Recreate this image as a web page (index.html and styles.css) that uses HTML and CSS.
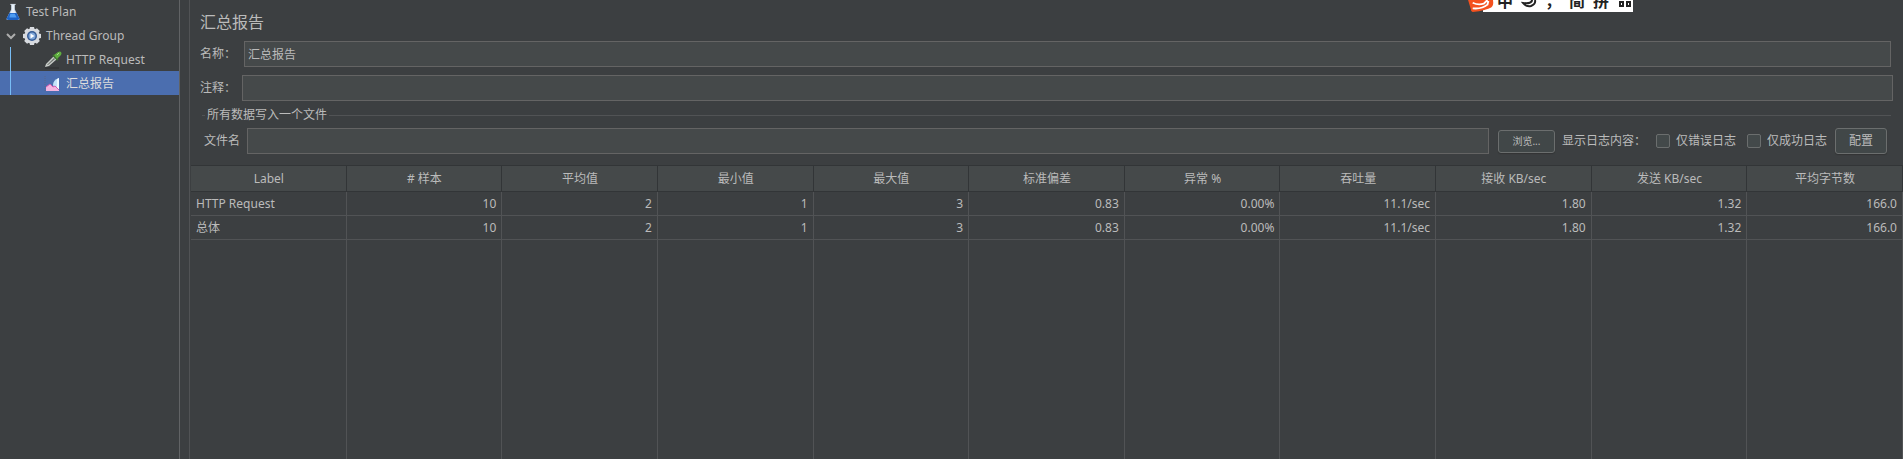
FILE: index.html
```html
<!DOCTYPE html>
<html lang="zh-CN">
<head>
<meta charset="utf-8">
<title>汇总报告</title>
<link rel="stylesheet" href="styles.css">
</head>
<body>
<div class="app">
  <nav class="tree">
    <ul class="tree-list">
      <li class="node node-root">
        <svg class="icon" viewBox="0 0 18 20"><path d="M7 1v6L2 17q-1 2 1 2h12q2 0 1-2L11 7V1z" fill="#b9cbdd"/><path d="M7.500 2v6L5 13h8l-2.500-5V2z" fill="#e8f0f8"/><path d="M5 11h8l3 6q0 2-2 2H4q-2 0-2-2z" fill="#1d62c4"/><path d="M6 12h5l2 4H5z" fill="#4d9cf2"/><path d="M6 1h6v1H6z" fill="#d9e2ea"/></svg>
        <span>Test Plan</span>
      </li>
      <li class="node node-group">
        <svg class="arrow" viewBox="0 0 10 10"><path d="M1 3l4 4 4-4" fill="none" stroke="#adadad" stroke-width="2"/></svg>
        <svg class="icon" viewBox="0 0 20 20"><g fill="#d8dbe0"><circle cx="10" cy="10" r="7.500"/><path d="M8 1h4l1 4H7zM8 19h4l1-4H7z"/><path d="M8 1h4l1 4H7zM8 19h4l1-4H7z" transform="rotate(45 10 10)"/><path d="M8 1h4l1 4H7zM8 19h4l1-4H7z" transform="rotate(90 10 10)"/><path d="M8 1h4l1 4H7zM8 19h4l1-4H7z" transform="rotate(135 10 10)"/></g><circle cx="10" cy="10" r="5" fill="#345a94"/><circle cx="10" cy="10" r="3.500" fill="#7fa6d8"/><path d="M8.500 7.500v5l4-2.500z" fill="#fff"/></svg>
        <span>Thread Group</span>
      </li>
      <li class="node node-leaf">
        <svg class="icon" viewBox="0 0 18 18"><path d="M1 17h14" stroke="#2d2f30" stroke-width="1"/><path d="M1 16l1-3 8-8 3 3-8 7z" fill="#c9cdc9"/><path d="M3 14l7-7 1 1-7 6z" fill="#6b706b"/><path d="M9 4l5 5" stroke="#3c6e2e" stroke-width="2"/><path d="M10 4l4-3q2-1 3 0t0 3l-4 4z" fill="#5fae3f"/><path d="M13 4l2-2" stroke="#a6dd8c"/></svg>
        <span>HTTP Request</span>
      </li>
      <li class="node node-leaf selected">
        <svg class="icon" viewBox="0 0 18 18"><path d="M1 1v15" stroke="#56678c" stroke-dasharray="1 1"/><path d="M9 10q0-5 6-7v12h-4z" fill="#c4e4fa"/><path d="M13 4l2-1v12h-2z" fill="#eef8ff"/><path d="M2 16v-4l4-3 3 3 2-1 4 4v1z" fill="#f3b4e0"/><path d="M2 12l4-3 3 3 2-1 4 4" fill="none" stroke="#d35ab2"/></svg>
        <span>汇总报告</span>
      </li>
    </ul>
  </nav>
  <main class="panel">
    <form class="form">
      <h1 class="title">汇总报告</h1>
      <div class="field field-name"><label for="name">名称：</label><input class="text" id="name" type="text" value="汇总报告"></div>
      <div class="field field-note"><label for="note">注释：</label><input class="text" id="note" type="text"></div>
      <fieldset class="file">
        <legend>所有数据写入一个文件</legend>
        <div class="file-row">
          <label for="file">文件名</label>
          <input class="text file-input" id="file" type="text">
          <button class="button browse" type="button">浏览...</button>
          <span class="log-label">显示日志内容：</span>
          <label class="check"><input type="checkbox">仅错误日志</label>
          <label class="check"><input type="checkbox">仅成功日志</label>
          <button class="button config" type="button">配置</button>
        </div>
      </fieldset>
    </form>
    <div class="table-area">
    <table class="report">
      <thead>
        <tr><th>Label</th><th># 样本</th><th>平均值</th><th>最小值</th><th>最大值</th><th>标准偏差</th><th>异常 %</th><th>吞吐量</th><th>接收 KB/sec</th><th>发送 KB/sec</th><th>平均字节数</th></tr>
      </thead>
      <tbody>
        <tr class="row"><td>HTTP Request</td><td>10</td><td>2</td><td>1</td><td>3</td><td>0.83</td><td>0.00%</td><td>11.1/sec</td><td>1.80</td><td>1.32</td><td>166.0</td></tr>
        <tr class="row"><td>总体</td><td>10</td><td>2</td><td>1</td><td>3</td><td>0.83</td><td>0.00%</td><td>11.1/sec</td><td>1.80</td><td>1.32</td><td>166.0</td></tr>
        <tr class="rest"><td></td><td></td><td></td><td></td><td></td><td></td><td></td><td></td><td></td><td></td><td></td></tr>
      </tbody>
    </table>
    </div>
  </main>
  <div class="ime">
    <svg class="ime-logo" viewBox="0 0 28 13"><path d="M0 0h27q1 6-2 8-5 3-20 5-2 0-2-3z" fill="#f4511e"/><path d="M5 3q6 3 12 1l4-4M5 9q10 1 16-4l1-4" fill="none" stroke="#fff" stroke-width="2"/></svg>
    <span>中</span>
    <svg class="ime-icon" viewBox="0 0 16 12"><path d="M11 0q0 4-9 3 3 4 8 3 5-2 4-6" fill="none" stroke="#222" stroke-width="2"/></svg>
    <span>，</span>
    <span>简</span>
    <span>拼</span>
    <svg class="ime-icon" viewBox="0 0 16 12"><path d="M3 2h3v4H3zM10 2h3v4h-3z" fill="none" stroke="#222" stroke-width="2"/></svg>
  </div>
</div>
</body>
</html>
```
FILE: styles.css
```css
* { box-sizing: border-box; }
body {
  margin: 0;
  background: #3c3f41;
  color: #bbbbbb;
  font: 12px/16px "Noto Sans", "Noto Sans CJK SC", sans-serif;
}
.app { display: flex; height: 100vh; position: relative; overflow: hidden; }
.tree { width: 190px; flex: none; border-right: 1px solid #515355; display: flex; }
.tree::after { content: ""; width: 9px; border-left: 1px solid #616365; }
.tree-list { flex: 1; margin: 0; padding: 0; list-style: none; }
.node { display: flex; align-items: center; height: 24px; padding-top: 1px; white-space: nowrap; }
.node-root { height: 23px; padding-left: 4px; gap: 4px; }
.node-group { padding-left: 6px; gap: 4px; }
.node-group .icon { width: 20px; height: 20px; margin-left: 2px; }
.node-leaf { margin-left: 10px; padding-left: 33px; gap: 4px; border-left: 1px solid #78bdf5; }
.node-leaf.selected { background: #4b6eaf; box-shadow: -10px 0 #4b6eaf; color: #dddddd; }
.icon { width: 18px; height: 18px; flex: none; }
.arrow { width: 10px; height: 10px; flex: none; }
.panel { flex: 1; min-width: 0; display: flex; flex-direction: column; }
.form { padding: 10px 10px 11px; }
.title { margin: 0; font-size: 16px; line-height: 24px; font-weight: 400; }
.field { display: flex; align-items: center; height: 26px; }
.field-name { margin: 7px 2px 8px 0; }
.field label { width: 42px; white-space: nowrap; }
.field-name label { width: 44px; }
.text {
  flex: 1; min-width: 0; height: 26px; padding: 0 3px;
  border: 1px solid #646464; background: #45494a;
  color: inherit; font: inherit; outline: 0;
}
.file { margin: 6px 2px 0; padding: 0; border: 0; border-top: 1px solid #515355; min-width: 0; }
.file legend { margin-left: 3px; padding: 0 2px; }
.file-row { display: flex; align-items: center; margin: 5px 4px 0 2px; white-space: nowrap; }
.file-input { margin: 0 9px 0 7px; }
.button {
  border: 1px solid #6b6e6e; border-radius: 3px; background: #414748;
  box-shadow: 0 1px 1px #323435; color: inherit; font: inherit; padding: 0;
}
.browse { width: 57px; height: 23px; font-size: 10px; }
.config { width: 52px; height: 26px; margin-left: 8px; }
.log-label { margin: 0 10px 0 7px; }
.check { display: flex; align-items: center; gap: 6px; }
.check + .check { margin-left: 11px; }
.check input {
  appearance: none; width: 14px; height: 14px; margin: 0;
  border: 1px solid #6b6e6e; border-radius: 2px; background: #43494a;
}
.table-area { flex: 1; display: flex; padding-left: 1px; }
.report { width: 100%; height: 100%; table-layout: fixed; border-collapse: separate; border-spacing: 0; }
.report th {
  height: 27px; padding: 1px 0 0 1px; font-weight: 400; background: #45494a;
  border: solid #323537; border-width: 1px 1px 1px 0;
}
.report td { padding: 0 5px; text-align: right; border: solid #515355; border-width: 0 1px 1px 0; }
.report td:first-child { text-align: left; }
.row td { height: 24px; }
.rest td { border-bottom: 0; }
.ime {
  position: absolute; top: 0; right: 270px; width: 166px; height: 12px;
  display: flex; align-items: flex-end; gap: 8px; overflow: hidden;
  background: linear-gradient(to right, transparent 16px, #fff 16px);
  color: #222; font-size: 16px; font-weight: 700; line-height: 22px;
}
.ime-logo { width: 28px; height: 12px; flex: none; margin-right: -6px; }
.ime-icon { width: 16px; height: 12px; flex: none; }
```
